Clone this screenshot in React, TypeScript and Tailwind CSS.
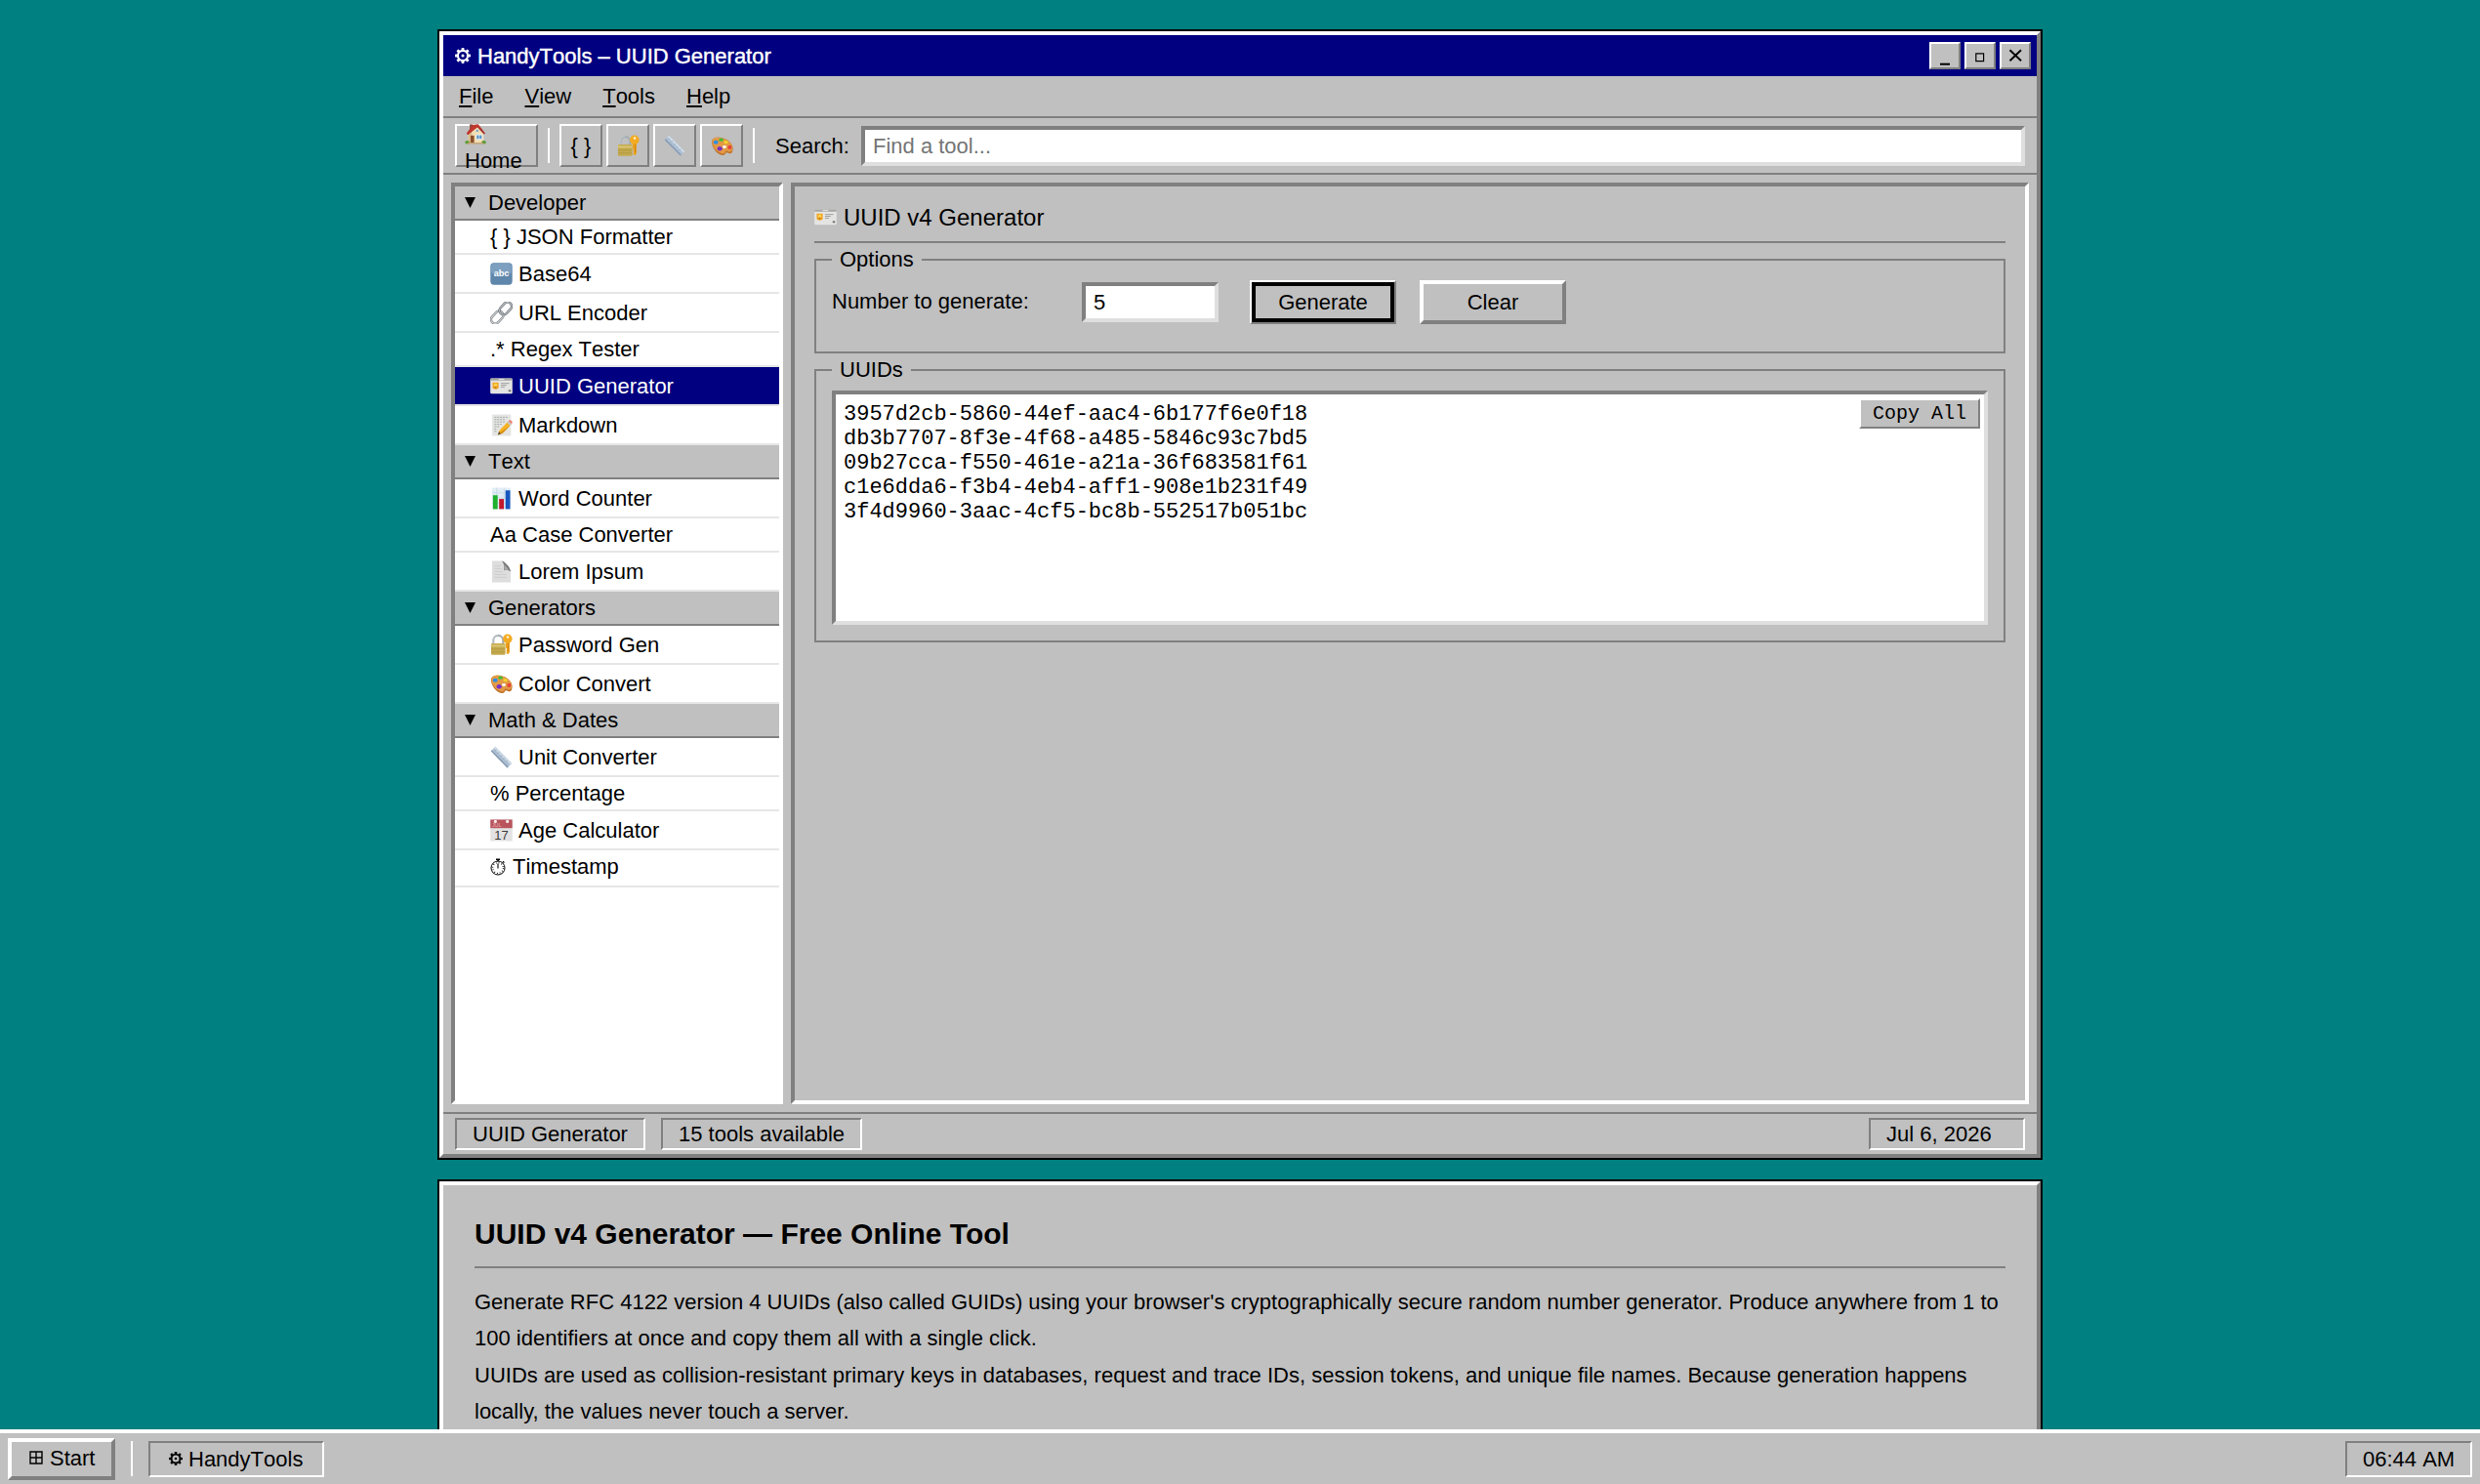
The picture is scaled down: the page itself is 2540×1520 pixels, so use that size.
import React from "react";

const RAISED = "border-t-white border-l-white border-r-[#808080] border-b-[#808080]";
const SUNKEN = "border-t-[#808080] border-l-[#808080] border-r-white border-b-white";
const FIELD = "border-4 border-t-[#808080] border-l-[#808080] border-r-[#dfdfdf] border-b-[#dfdfdf] bg-white";

type IconProps = { className?: string };

const Svg = ({ className = "h-[23px] w-[23px]", children }: IconProps & { children: React.ReactNode }) => (
  <svg viewBox="0 0 24 24" fill="none" className={`block shrink-0 ${className}`}>
    {children}
  </svg>
);

const Gear = ({ className }: IconProps) => (
  <Svg className={className}>
    <circle cx="12" cy="12" r="7.6" stroke="currentColor" strokeWidth="3.2" />
    <circle cx="12" cy="12" r="2.3" fill="currentColor" />
    {[0, 45, 90, 135, 180, 225, 270, 315].map((a) => (
      <rect key={a} x="9.8" y="0" width="4.4" height="4.6" rx="1" fill="currentColor" transform={`rotate(${a} 12 12)`} />
    ))}
  </Svg>
);

const House = ({ className }: IconProps) => (
  <Svg className={className}>
    <path d="M5.5 1.5h3.6v6H5.5z" fill="#8e4a3c" />
    <path d="M4 11 12.5 3.5 21 11v11H4z" fill="#f1ddb4" />
    <path d="M4 11v11h4V8z" fill="#d9bd8d" />
    <path d="M2 11.6 9.2 2.2 15 1.6l8 10-1.6 1L14 4.6 3.6 13z" fill="#a32b2b" />
    <path d="M9.2 2.2 15 1.6 20 8l-6-3.4L7 10 3.6 13 2 11.6z" fill="#c0392f" />
    <circle cx="14" cy="8.6" r="1.3" fill="#6ea6d0" />
    <path d="M6.5 14h4v8h-4z" fill="#8b4f2b" />
    <path d="M13 13.2h6.4v5H13z" fill="#4d90c8" stroke="#fff" strokeWidth=".8" />
    <path d="M16.2 13.2v5" stroke="#fff" strokeWidth=".8" />
    <ellipse cx="2.8" cy="21.5" rx="2.6" ry="1.9" fill="#5d9b35" />
    <ellipse cx="21.3" cy="21.5" rx="2.6" ry="1.9" fill="#5d9b35" />
    <path d="M3 22h18v1.4H3z" fill="#c5a06e" />
  </Svg>
);

const LockKey = ({ className }: IconProps) => (
  <Svg className={className}>
    <path d="M3.4 11V7.2a5.2 5.2 0 0 1 10.4 0V11" stroke="#a4adb3" strokeWidth="2.2" />
    <path d="M3 11V7.2A5.6 5.6 0 0 1 8.6 1.4" stroke="#d6dcdf" strokeWidth=".8" />
    <rect x="1" y="10.4" width="15.2" height="12.4" rx="1.2" fill="#c4aa4e" />
    <path d="M1 12h15.200v2H1z" fill="#dcc777" />
    <path d="M1 16.400h15.200M1 19.600h15.200" stroke="#b0963f" strokeWidth=".8" />
    <path d="M16.600 8.500h4.200v11.600l-1.900 2.200-1.900-1.800 1-1.300-1-1.300 1-1.400-1.400-1.300z" fill="#eda21d" />
    <circle cx="18.600" cy="5.600" r="5" fill="#f2ab23" />
    <circle cx="18.800" cy="3.600" r="1.300" fill="#fff3cf" />
    <path d="M19.400 10v9" stroke="#c97d0c" strokeWidth=".8" />
  </Svg>
);

const Ruler = ({ className }: IconProps) => (
  <Svg className={className}>
    <path d="M5.6.8 23.2 18.6 18.4 23.4.8 5.6z" fill="#aebfd1" />
    <path d="M5.6.8 23.2 18.6l-1.5 1.5L4 2.4z" fill="#cfdce8" />
    <path d="M.8 5.6 18.4 23.4l1-1L1.8 4.6z" fill="#8298b1" />
    <path d="m5 5.5 1.7-1.7M8 8.5l1.7-1.7M11 11.5l1.7-1.7M14 14.5l1.7-1.7M17 17.5l1.7-1.7" stroke="#8da3bb" strokeWidth=".8" />
  </Svg>
);

const Palette = ({ className }: IconProps) => (
  <Svg className={className}>
    <path d="M1 8.2C.6 4.300 4.600 2.400 9.400 2.800 16.600 3.400 23.600 8.600 23.600 14.800c0 4.600-2.500 6.200-4.400 5-1.800-1.200-3-1-3.400 0-1 2.200-3 2.600-5.600 1.600C5.400 19.500 1.400 13.600 1 8.200z" fill="#c0722a" />
    <path d="M1.400 7.400C1.400 4.200 5 2.600 9.400 3 16.400 3.600 23.200 8.600 23.200 14.200c0 3.600-2.400 4.800-4.200 3.800-2.200-1.200-3.400-.8-3.800.6-.6 1.600-2 2-4.200 1.200C5.600 18 1.600 12.800 1.400 7.400z" fill="#e39a45" />
    <ellipse cx="5.400" cy="8.200" rx="2.600" ry="2.100" fill="#2f8fe0" />
    <ellipse cx="11" cy="5.400" rx="2.400" ry="1.700" fill="#3fbf3a" />
    <ellipse cx="16.200" cy="8" rx="2.300" ry="1.700" fill="#f4d22c" />
    <ellipse cx="20.200" cy="13.500" rx="2.100" ry="2.200" fill="#e8423d" />
    <ellipse cx="9.600" cy="14.800" rx="2.700" ry="2.400" fill="#7a2fc4" />
    <ellipse cx="14.600" cy="13" rx="2" ry="1.500" fill="#fff" />
  </Svg>
);

const Abc = ({ className }: IconProps) => (
  <Svg className={className}>
    <rect x=".3" y=".3" width="23.4" height="23.4" rx="3.8" fill="#5f86ab" />
    <rect x="1.2" y="1" width="21.6" height="11" rx="3" fill="#7d9fc0" />
    <text x="12" y="15" textAnchor="middle" fontSize="9.5" fontWeight="700" fill="#fff" fontFamily="Liberation Sans, sans-serif">
      abc
    </text>
  </Svg>
);

const Link = ({ className }: IconProps) => (
  <Svg className={className}>
    <g transform="rotate(-47 12 12)">
      <rect x="-2" y="7.6" width="15" height="8.8" rx="4.4" stroke="#84898e" strokeWidth="2.6" />
      <rect x="-2" y="7.6" width="15" height="8.8" rx="4.4" stroke="#d8dbdd" strokeWidth="1" />
      <rect x="11" y="7.6" width="15" height="8.8" rx="4.4" stroke="#6d7277" strokeWidth="2.6" />
      <rect x="11" y="7.6" width="15" height="8.8" rx="4.4" stroke="#c9cdd1" strokeWidth="1" />
    </g>
  </Svg>
);

const IdCard = ({ className }: IconProps) => (
  <Svg className={className}>
    <rect x=".2" y="3.6" width="23.6" height="16.6" rx="1.4" fill="#e4e4e2" />
    <path d="M1.6 3.6h20.8c.8 0 1.400.6 1.400 1.400v1H.2V5c0-.8.6-1.400 1.400-1.400z" fill="#a5a5a3" />
    <path d="M9 4.300h6v1H9z" fill="#e8e8e8" />
    <path d="M2.600 8.200h6.400v5.600c-1 2-5.400 2-6.400 0z" fill="#f0a322" />
    <circle cx="5.800" cy="10.700" r="1.900" fill="#f9cf4e" />
    <path d="M5 12.600h1.600v1.200H5z" fill="#a36110" />
    <path d="M11.500 9h9M11.500 11h6M11.500 13h4" stroke="#8c8c8c" strokeWidth=".8" />
    <path d="M19.600 16h2.600v2h-2.600z" fill="#707070" />
  </Svg>
);

const Memo = ({ className }: IconProps) => (
  <Svg className={className}>
    <path d="M2.200.6h20v22.800h-20z" fill="#e4e5e3" />
    <path d="M4.500 3.500h14M4.500 6h11M4.500 8.500h12M4.500 11h8M4.500 13.500h6M4.500 16h3M4.500 18.500h3" stroke="#9ca59f" strokeWidth=".9" strokeDasharray="2.2 .8" />
    <path d="M8.200 22.400l1.700-5L19.600 7.600l3.400 3.200-9.800 9.900z" fill="#f5b324" />
    <path d="m18 9.200 3.400 3.200 1.600-1.600-3.400-3.200z" fill="#c3c7ca" />
    <path d="m19.600 7.600 1-1c1.400-.8 3.800 1.400 3 2.700l-.6 1.500z" fill="#ee7f74" />
    <path d="m11.600 19 9.800-6.600-8.200 8.300-1.800.7z" fill="#d88c12" />
    <path d="m8.200 22.400 1.200-3.500 2.300 2.300z" fill="#5d4a38" />
  </Svg>
);

const Bars = ({ className }: IconProps) => (
  <Svg className={className}>
    <path d="M2 .6h20v22.800H2z" fill="#e2edf5" />
    <path d="M2 6h20M2 11.500h20M2 17h20M7 .6v22.800M15 .6v22.800" stroke="#c3d6e4" strokeWidth=".7" />
    <path d="M3 8.600h5V23.400H3z" fill="#1fb02c" />
    <path d="M9.600 12.600h5V23.400h-5z" fill="#c2182e" />
    <path d="M16.400 3.400h5V23.400h-5z" fill="#1757c0" />
  </Svg>
);

const Page = ({ className }: IconProps) => (
  <Svg className={className}>
    <path d="M2 .4h12l8 11.400v11.800H2z" fill="#dedede" />
    <path d="M12.500.4C15.500 1 22 7.500 22 12c-1.800-1.600-4.600-2-7.400-1.200C15.600 6.800 14.800 3 12.500.4z" fill="#757575" />
    <path d="M14.500 3.500c1 2 1.300 4.500.6 7l5-.3z" fill="#a8a8a8" />
    <path d="M4.500 6h7M4.500 9h8M4.500 12h9M4.500 15h13M4.500 18h13" stroke="#cacaca" strokeWidth=".9" />
  </Svg>
);

const Calendar = ({ className }: IconProps) => (
  <Svg className={className}>
    <path d="M.3.5h23.400v23H.3z" fill="#e2e2e2" />
    <path d="M.3.5h23.400V9.600H.3z" fill="#b9545c" />
    <circle cx="5.6" cy="2.600" r="1.700" fill="#f5eaea" />
    <circle cx="18.400" cy="2.600" r="1.700" fill="#f5eaea" />
    <text x="2" y="8.600" fontSize="5.600" fill="#e9b9bb" fontFamily="Liberation Sans, sans-serif">
      JUL
    </text>
    <text x="12" y="21.400" textAnchor="middle" fontSize="13.500" fill="#3c3c3c" fontFamily="Liberation Sans, sans-serif">
      17
    </text>
  </Svg>
);

const Stopwatch = () => (
  <svg viewBox="0 0 16 18" fill="none" stroke="#000" className="mr-px block h-[18px] w-4 shrink-0">
    <circle cx="8" cy="10" r="7" strokeWidth="1" />
    <circle cx="8" cy="10" r="5.400" strokeWidth="1.300" strokeDasharray=".8 2.027" />
    <path d="M8 10.500V5.500" strokeWidth="1.100" />
    <path d="M6 1.200h4M8 1v2.200" strokeWidth="1.500" />
    <path d="m13 3.200 1.400 1.400" strokeWidth="1.300" />
  </svg>
);

type Item = { icon?: React.ReactNode; label: string; height: string; active?: boolean };
type Group = { name: string; items: Item[] };

const GROUPS: Group[] = [
  {
    name: "Developer",
    items: [
      { label: "{ } JSON Formatter", height: "h-[35px]" },
      { icon: <Abc />, label: "Base64", height: "h-10" },
      { icon: <Link />, label: "URL Encoder", height: "h-10" },
      { label: ".* Regex Tester", height: "h-[35px]" },
      { icon: <IdCard />, label: "UUID Generator", height: "h-10", active: true },
      { icon: <Memo />, label: "Markdown", height: "h-10" },
    ],
  },
  {
    name: "Text",
    items: [
      { icon: <Bars />, label: "Word Counter", height: "h-10" },
      { label: "Aa Case Converter", height: "h-[35px]" },
      { icon: <Page />, label: "Lorem Ipsum", height: "h-10" },
    ],
  },
  {
    name: "Generators",
    items: [
      { icon: <LockKey />, label: "Password Gen", height: "h-10" },
      { icon: <Palette />, label: "Color Convert", height: "h-10" },
    ],
  },
  {
    name: "Math & Dates",
    items: [
      { icon: <Ruler />, label: "Unit Converter", height: "h-10" },
      { label: "% Percentage", height: "h-[35px]" },
      { icon: <Calendar />, label: "Age Calculator", height: "h-10" },
      { icon: <Stopwatch />, label: "Timestamp", height: "h-[38px] pb-[3px]" },
    ],
  },
];

const UUIDS = [
  "3957d2cb-5860-44ef-aac4-6b177f6e0f18",
  "db3b7707-8f3e-4f68-a485-5846c93c7bd5",
  "09b27cca-f550-461e-a21a-36f683581f61",
  "c1e6dda6-f3b4-4eb4-aff1-908e1b231f49",
  "3f4d9960-3aac-4cf5-bc8b-552517b051bc",
];

const Sidebar = () => (
  <nav className={`w-[340px] shrink-0 border-4 bg-white [font-kerning:none] ${SUNKEN}`}>
    {GROUPS.map((group) => (
      <div key={group.name}>
        <div className="flex h-[35px] items-center border-b-2 border-[#808080] bg-[#c0c0c0] pl-2.5">
          <svg viewBox="0 0 11 11" className="mr-[13px] h-[11px] w-[11px]">
            <path d="M0 0h11L5.5 11z" />
          </svg>
          {group.name}
        </div>
        {group.items.map((item) => (
          <div
            key={item.label}
            className={`flex items-center gap-1.5 border-b-2 border-[#e6e6e6] pl-9 whitespace-pre ${item.height} ${
              item.active ? "bg-[#000080] bg-clip-padding text-white" : ""
            }`}
          >
            {item.icon}
            <span>{item.label}</span>
          </div>
        ))}
      </div>
    ))}
  </nav>
);

const WindowButton = ({ children }: { children: React.ReactNode }) => (
  <button className={`flex h-7 w-8 items-center justify-center border-2 bg-[#c0c0c0] ${RAISED}`}>
    <svg viewBox="0 0 28 24" fill="none" stroke="#000" className="block h-6 w-7">
      {children}
    </svg>
  </button>
);

const ToolButton = ({ children }: { children: React.ReactNode }) => (
  <button className={`flex h-11 w-11 items-center justify-center border-2 bg-[#c0c0c0] ${RAISED}`}>{children}</button>
);

const Separator = () => <div className="h-9 w-0.5 bg-white" />;

const Toolbar = () => (
  <div className="flex h-[58px] items-center border-b-2 border-[#808080] px-3">
    <button className={`flex h-11 w-[85px] flex-col items-start border-2 pl-2 leading-[25px] ${RAISED}`}>
      <House className="-mt-[3px] mb-1 h-[22px] w-[22px]" />
      <span>Home</span>
    </button>
    <div className="px-2.5">
      <Separator />
    </div>
    <div className="flex gap-1">
      <ToolButton>{"{ }"}</ToolButton>
      <ToolButton>
        <LockKey />
      </ToolButton>
      <ToolButton>
        <Ruler className="h-[22px] w-[22px]" />
      </ToolButton>
      <ToolButton>
        <Palette />
      </ToolButton>
    </div>
    <div className="pr-[21px] pl-2.5">
      <Separator />
    </div>
    <label className="w-[88px]">Search:</label>
    <input
      placeholder="Find a tool..."
      className={`h-[41px] min-w-0 flex-1 rounded-none px-2 pt-px placeholder:text-[#757575] ${FIELD}`}
    />
  </div>
);

const Legend = ({ children }: { children: React.ReactNode }) => <legend className="px-2 leading-[26px]">{children}</legend>;

const Generator = () => (
  <main className={`flex-1 border-4 p-5 ${SUNKEN}`}>
    <h2 className="flex h-[38px] items-start gap-[7px] border-b-2 border-[#808080] text-[24px] leading-[23px]">
      <IdCard />
      <span>UUID v4 Generator</span>
    </h2>
    <fieldset className="mt-1 h-[109px] border-2 border-[#808080] px-4 pt-2">
      <Legend>Options</Legend>
      <div className="flex h-[45px] items-center">
        <label className="w-64 pb-[3px]">Number to generate:</label>
        <input defaultValue="5" className={`mr-8 h-[41px] w-[140px] rounded-none px-2 ${FIELD}`} />
        <button className={`mr-6 h-[45px] w-[150px] border-2 shadow-[inset_0_0_0_4px_#000] ${RAISED}`}>Generate</button>
        <button className={`h-[45px] w-[150px] border-4 ${RAISED}`}>Clear</button>
      </div>
    </fieldset>
    <fieldset className="mt-1 border-2 border-[#808080] px-4 pt-2 pb-4">
      <Legend>UUIDs</Legend>
      <div className={`relative h-60 p-2 font-['Liberation_Mono',monospace] leading-[25px] ${FIELD}`}>
        {UUIDS.map((id) => (
          <div key={id}>{id}</div>
        ))}
        <button className={`absolute top-1 right-1 flex h-[31px] w-[124px] items-center justify-center border-2 bg-[#c0c0c0] text-[20px] ${RAISED}`}>
          Copy All
        </button>
      </div>
    </fieldset>
  </main>
);

const StatusBar = () => (
  <footer className="flex h-[43px] gap-4 border-t-2 border-[#808080] px-3 py-1">
    <div className={`flex h-[33px] w-[195px] items-center border-2 pl-4 ${SUNKEN}`}>UUID Generator</div>
    <div className={`flex h-[33px] w-[206px] items-center border-2 pl-4 ${SUNKEN}`}>15 tools available</div>
    <div className={`ml-auto flex h-[33px] w-40 items-center border-2 pl-4 ${SUNKEN}`}>Jul 6, 2026</div>
  </footer>
);

const Taskbar = () => (
  <div className="fixed inset-x-0 bottom-0 flex h-14 items-center border-t-4 border-white bg-[#c0c0c0] px-2 [font-kerning:none]">
    <button className={`flex h-[43px] w-[110px] items-center border-4 pb-0.5 pl-[18px] ${RAISED}`}>
      <svg viewBox="0 0 14 14" fill="none" stroke="#000" className="mr-[7px] h-[14px] w-[14px]">
        <path d="M1 1h12v12H1zM7 1v12M1 7h12" strokeWidth="1.4" />
      </svg>
      Start
    </button>
    <div className="px-4">
      <Separator />
    </div>
    <div className={`flex h-[37px] w-[180px] items-center border-2 pl-[19px] ${SUNKEN}`}>
      <Gear className="mr-1.5 h-[14px] w-[14px]" />
      HandyTools
    </div>
    <div className={`ml-auto flex h-[37px] w-[130px] items-center border-2 pl-4 whitespace-nowrap ${SUNKEN}`}>06:44 AM</div>
  </div>
);

export default function App() {
  return (
    <div className="h-[1520px] overflow-hidden bg-[#008080] pt-8 font-['Liberation_Sans',Arial,sans-serif] text-[22px] leading-[25px] text-black">
      <div className="mx-auto flex w-[1640px] flex-col gap-6">
        <section className={`flex h-[1154px] flex-col border-4 bg-[#c0c0c0] shadow-[0_0_0_2px_#000] ${RAISED}`}>
          <header className="flex h-[42px] shrink-0 items-center bg-[#000080] pr-1.5 pl-3 text-white [font-kerning:none]">
            <Gear className="mr-[7px] h-4 w-4" />
            <h1 className="[-webkit-text-stroke:0.4px_white]">HandyTools – UUID Generator</h1>
            <div className="ml-auto flex gap-1">
              <WindowButton>
                <path d="M9 20.7h10" strokeWidth="2" />
              </WindowButton>
              <WindowButton>
                <path d="M9.8 9.8h7.8v7.8H9.8z" strokeWidth="1.2" />
              </WindowButton>
              <WindowButton>
                <path d="m8.500 6.300 11.500 11M20 6.300l-11.500 11" strokeWidth="1.900" />
              </WindowButton>
            </div>
          </header>
          <div className="flex h-[43px] shrink-0 items-center border-b-2 border-[#808080] [font-kerning:none]">
            {["File", "View", "Tools", "Help"].map((name) => (
              <div key={name} className="px-4">
                <span className="underline decoration-2 underline-offset-2">{name[0]}</span>
                {name.slice(1)}
              </div>
            ))}
          </div>
          <Toolbar />
          <div className="flex flex-1 gap-2 p-2">
            <Sidebar />
            <Generator />
          </div>
          <StatusBar />
        </section>
        <article className={`border-4 bg-[#c0c0c0] p-8 shadow-[0_0_0_2px_#000] ${RAISED}`}>
          <h2 className="mb-4 h-[53px] border-b-2 border-[#808080] text-[30px] leading-[35px] font-bold">
            UUID v4 Generator — Free Online Tool
          </h2>
          <p className="leading-[37.4px]">
            Generate RFC 4122 version 4 UUIDs (also called GUIDs) using your browser's cryptographically secure random number
            generator. Produce anywhere from 1 to 100 identifiers at once and copy them all with a single click.
          </p>
          <p className="leading-[37.4px]">
            UUIDs are used as collision-resistant primary keys in databases, request and trace IDs, session tokens, and unique
            file names. Because generation happens locally, the values never touch a server.
          </p>
        </article>
      </div>
      <Taskbar />
    </div>
  );
}
